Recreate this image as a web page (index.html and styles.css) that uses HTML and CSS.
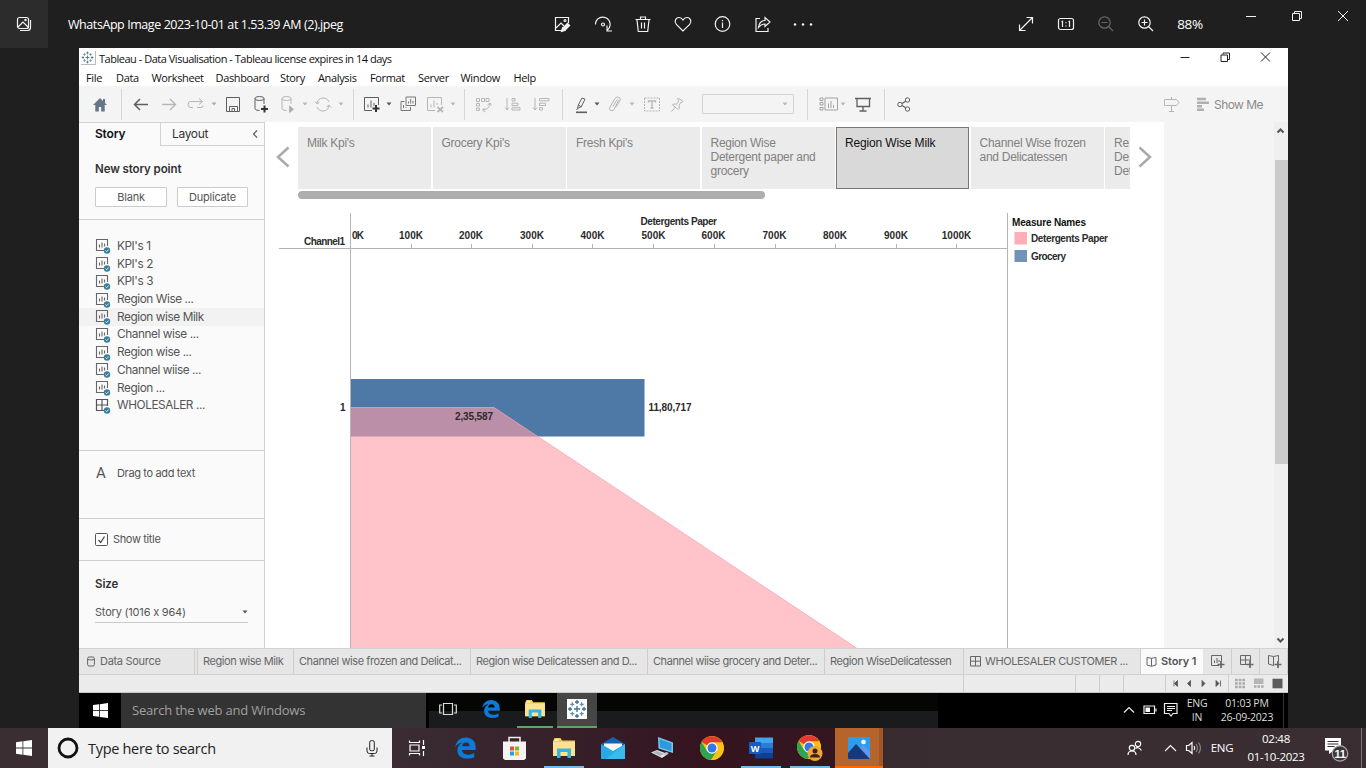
FILE: index.html
```html
<!DOCTYPE html>
<html lang="en">
<head>
<meta charset="utf-8">
<title>WhatsApp Image 2023-10-01 at 1.53.39 AM (2).jpeg</title>
<link rel="stylesheet" href="styles.css">
</head>
<body>
<svg class="defs" width="0" height="0">
  <symbol id="sheet" viewBox="0 0 16 16"><path d="M9 12.500H1.500V1.500H12.500V8M4.500 9.500V6.500M7 9.500V4.500M9.500 8.500V5.500" fill="none" stroke="#666" stroke-width="1.100"/><circle cx="12" cy="12.500" r="3.200" fill="#3c7f9c"/><path d="M10.500 12.500l1.200 1.200 2-2.200" fill="none" stroke="#fff" stroke-width=".8"/></symbol>
  <symbol id="dash" viewBox="0 0 16 16"><path d="M9 12.500H1.500V1.500H12.500V8M7 1.500V12.500M1.500 7H12.500" fill="none" stroke="#555" stroke-width="1.200"/><circle cx="12" cy="12.500" r="3.200" fill="#3c7f9c"/><path d="M10.500 12.500l1.200 1.200 2-2.200" fill="none" stroke="#fff" stroke-width=".8"/></symbol>
  <symbol id="caret" viewBox="0 0 6 4"><path d="M.5.500H5.500L3 3.600Z"/></symbol>
  <symbol id="win" viewBox="0 0 16 16"><path d="M0 2.200L6.500 1.300V7.600H0ZM7.300 1.200L16 0V7.600H7.300ZM0 8.400H6.500V14.700L0 13.800ZM7.300 8.400H16V16L7.300 14.800Z" fill="#fff"/></symbol>
  <symbol id="edge" viewBox="0 0 20 20"><path d="M.3 9C1 3.500 5 0 10.300 0 16 0 20 4 19.700 9.500V12H6.600c.2 3 2.600 4.400 5.800 4.400 2.300 0 4.100-.6 5.900-1.700v4C16.300 19.700 14 20 11.500 20 5.800 20 2.300 17 2.300 12.300c0-3.400 1.800-6 5-7.500C4.500 5 1.800 6.500.3 9Zm6.500-.6h7.100c0-2.300-1.100-3.600-3.300-3.600S7 6.300 6.800 8.400Z" fill="#0b7bd8"/></symbol>
  <symbol id="folder" viewBox="0 0 22 20"><path d="M0 2.500V18H22V2.500H9L7.500 0H1.500L.5 2.500Z" fill="#f5c85a"/><path d="M0 4H22V18H0Z" fill="#ffe28d"/><path d="M1.500 1.300H6V3H1.500Z" fill="#fff3c0"/><path d="M4 10.500H18V20H14.500V14H7.500V20H4Z" fill="#35b3e4"/></symbol>
  <symbol id="chrome" viewBox="0 0 24 24"><circle cx="12" cy="12" r="12" fill="#fbc116"/><path d="M12 12L1.600 6A12 12 0 0 1 22.400 6.500H12Z" fill="#e33b2e"/><path d="M1.600 6A12 12 0 0 0 11 24L17 15 12 12 7 15Z" fill="#2da44e"/><path d="M12 6.500H22.400A12 12 0 0 1 11 24L17 15Z" fill="#fbc116"/><circle cx="12" cy="12" r="5.700" fill="#fff"/><circle cx="12" cy="12" r="4.500" fill="#3478e5"/></symbol>
  <symbol id="tableau" viewBox="0 0 20 20"><g stroke="#3b7396" stroke-width="1.300"><path d="M10 7v6M7 10h6M10 1v4M8 3h4M10 15v4M8 17h4M1 10h4M3 8v4M15 10h4M17 8v4"/><path d="M5.300 3.300v4M3.300 5.300h4M14.700 3.300v4M12.700 5.300h4M5.300 12.700v4M3.300 14.700h4M14.700 12.700v4M12.700 14.700h4" stroke="#6090aa"/></g></symbol>
</svg>

<header class="viewer">
  <span class="gallery"><svg width="16" height="16" viewBox="0 0 16 16"><rect x="1.500" y="1.500" width="11" height="11" rx="2"/><path d="M14.500 4v7.500q0 3-3 3H4M2 11l5-5 5.500 5.500"/><circle cx="9.500" cy="4" r=".6"/></svg></span>
  <span class="file">WhatsApp Image 2023-10-01 at 1.53.39 AM (2).jpeg</span>
  <svg width="20" height="20" viewBox="0 0 20 20"><path d="M9 16.500H2.500V3.500h13V9M3 14l5-5 3 3"/><circle cx="12" cy="6.500" r="1"/><path d="M8.500 17.500l1-4 5-5 3 3-5 5Z" fill="#eee" stroke="none"/><path d="M8.500 17.500l1-3.500 2.500 2.500Z"/></svg>
  <svg width="20" height="20" viewBox="0 0 20 20"><path d="M2.500 10.500A7.300 7.300 0 1 1 14.500 16M14 11.500V17h5"/><circle cx="10" cy="10.500" r="1.500"/></svg>
  <svg width="20" height="20" viewBox="0 0 20 20"><path d="M2.500 5.500h15M7.500 5V3h5v2M4 6l1.300 11.500h9.400L16 6M8.500 8.500v6M11.500 8.500v6"/></svg>
  <svg width="20" height="20" viewBox="0 0 20 20"><path d="M10 17L3.300 10.300C1 8 2.300 3.500 6 3.500q2.500 0 4 2.500 1.500-2.500 4-2.500c3.700 0 5 4.500 2.700 6.800Z"/></svg>
  <svg width="20" height="20" viewBox="0 0 20 20"><circle cx="9.500" cy="10" r="7.300"/><path d="M9.500 8.500v5.500M9.500 6v1.200"/></svg>
  <svg width="20" height="20" viewBox="0 0 20 20"><path d="M7 4.500H3v13h12V14M5.500 13.500C6 9 8 6.500 12 6.500V3.500l5 4.500-5 4.500V10C9.500 9.800 7.500 11 5.500 13.500Z"/></svg>
  <svg width="20" height="20" viewBox="0 0 20 20"><g fill="#fff" stroke="none"><circle cx="2" cy="10.500" r="1.200"/><circle cx="10" cy="10.500" r="1.200"/><circle cx="18" cy="10.500" r="1.200"/></g></svg>
  <i></i>
  <svg width="20" height="20" viewBox="0 0 20 20"><path d="M3.500 16.500L16.500 3.500M10.500 3.500h6v6M3.500 10.500v6h6"/></svg>
  <svg width="20" height="20" viewBox="0 0 20 20"><rect x="2.500" y="4.500" width="15" height="11" rx="2"/><path d="M5.500 8l1-.7V13M12.500 8l1-.7V13M10 8.200v1M10 11.500v1"/></svg>
  <svg class="off" width="20" height="20" viewBox="0 0 20 20"><circle cx="8.500" cy="8.500" r="5.700"/><path d="M12.500 12.500l4.500 4.500M5.500 8.500h6"/></svg>
  <svg width="20" height="20" viewBox="0 0 20 20"><circle cx="8.500" cy="8.500" r="5.700"/><path d="M12.500 12.500l4.500 4.500M5.500 8.500h6M8.500 5.500v6"/></svg>
  <span class="pct">88%</span>
  <i></i>
  <svg class="ctl" width="12" height="12" viewBox="0 0 12 12"><path d="M1 6.500h10"/></svg>
  <svg class="ctl" width="12" height="12" viewBox="0 0 12 12"><path d="M1.500 3.500h7v7h-7ZM3.500 3.500v-2h7v7h-2"/></svg>
  <svg class="ctl" width="12" height="12" viewBox="0 0 12 12"><path d="M1 1l10 10M11 1L1 11"/></svg>
</header>

<main class="photo">
  <div class="titlebar">
    <span class="logo"><svg width="13" height="13"><use href="#tableau"/></svg></span>
    <span class="title">Tableau - Data Visualisation - Tableau license expires in 14 days</span>
    <svg width="12" height="12" viewBox="0 0 12 12"><path d="M1.500 6.500h9"/></svg>
    <svg width="12" height="12" viewBox="0 0 12 12"><path d="M2 4h6.500v6.500H2ZM4 3.500V2h6.500v6.500H9"/></svg>
    <svg width="12" height="12" viewBox="0 0 12 12"><path d="M2 1.500l9 9M11 1.500l-9 9"/></svg>
  </div>
  <nav class="menu"><span>File</span><span>Data</span><span>Worksheet</span><span>Dashboard</span><span>Story</span><span>Analysis</span><span>Format</span><span>Server</span><span>Window</span><span>Help</span></nav>

  <div class="toolbar">
    <svg class="ic" viewBox="0 0 20 20"><path d="M10 4L3 11h2.300v6.500h3.500V13h2.400v4.500h3.500V11H17L15 9V5h-2v2Z" fill="#66758a" stroke="none"/></svg>
    <b></b>
    <svg class="ic dk" viewBox="0 0 20 20"><path d="M17 10.500H3.500M9 5l-5.500 5.500L9 16" stroke-width="1.500"/></svg>
    <svg class="ic" viewBox="0 0 20 20"><path d="M3 10.500h13.500M11 5l5.500 5.500L11 16" stroke-width="1.400"/></svg>
    <svg class="ic" viewBox="0 0 20 20"><path d="M7 13.500H5q-3 0-3-3t3-3H16M13 4.500l3.500 3-3.500 3M11 13.500h4q2 0 2-2"/></svg>
    <svg class="cr"><use href="#caret"/></svg>
    <svg class="ic dk" viewBox="0 0 20 20"><path d="M3.500 3.500h13v14h-13ZM6.500 17V12.500h8V17M9 17v-2.500h2.500V17"/></svg>
    <svg class="ic dk" viewBox="0 0 20 20"><ellipse cx="8.500" cy="4.500" rx="4.500" ry="2"/><path d="M4 4.500v10q0 2 4.500 2M13 4.500V10"/><path d="M13.500 11.500v7M10 15h7" stroke="#333" stroke-width="2"/></svg>
    <svg class="ic" viewBox="0 0 20 20"><ellipse cx="8.500" cy="4.500" rx="4.500" ry="2"/><path d="M4 4.500v10q0 2 4.500 2M13 4.500V10"/><path d="M11.500 12v6.500l4-3.200Z" fill="#aaa"/></svg>
    <svg class="cr lt"><use href="#caret"/></svg>
    <svg class="ic" viewBox="0 0 20 20"><path d="M4 9A6.300 6.300 0 0 1 16 8M16 12A6.300 6.300 0 0 1 4 13M2 7.500L4 10l2.500-2M18 13.500L16 11l-2.500 2"/></svg>
    <svg class="cr lt"><use href="#caret"/></svg>
    <b></b>
    <svg class="ic dk" viewBox="0 0 20 20"><path d="M10 16.500H2.500v-13h14V11M6 13.500v-3M9 13.500v-7M12 12V9"/><path d="M14 11v7M10.500 14.500h7" stroke="#333" stroke-width="2"/></svg>
    <svg class="cr blk"><use href="#caret"/></svg>
    <svg class="ic md" viewBox="0 0 20 20"><path d="M8 3h9.500v8.500H8ZM6.500 7.500H3v9h9.500V13M10.500 9.500v-2M12.700 9.500V5M15 9.500V7M5.500 14v-3M8 14v-1"/></svg>
    <svg class="ic" viewBox="0 0 20 20"><path d="M10 16.500H2.500v-13h14V11M6 13.500v-3M9 13.500v-7M12 11V9"/><path d="M12.500 13l5.500 5M18 13l-5.500 5" stroke-width="1.700"/></svg>
    <svg class="cr lt"><use href="#caret"/></svg>
    <b></b>
    <svg class="ic" viewBox="0 0 20 20"><path d="M3.500 4.500h3v3h-3ZM8.500 4.500h3v3h-3ZM13 4.500h3v3h-3ZM3.500 9.500h3v2.500h-3ZM3.500 14h3v2.500h-3ZM17 9q0 6-7 7M12 13.500L9.500 16l3 2M14.500 11l2.500-2 1.500 2.500"/></svg>
    <svg class="ic" viewBox="0 0 20 20"><path d="M4 4v12M2 13.500L4 16l2-2.500M9 4.500h3v2.500H9ZM9 9.200h6v2.300H9ZM9 13.700h8v2.300H9Z"/></svg>
    <svg class="ic" viewBox="0 0 20 20"><path d="M4 4v12M2 13.500L4 16l2-2.500M8.500 4.500H18v2.300H8.500ZM8.500 9.200h6v2.300h-6ZM8.500 13.700h3v2.300h-3Z"/></svg>
    <b></b>
    <svg class="ic dk" viewBox="0 0 20 20"><path d="M6.500 14.500l.8-3.500L11 4l3 1.200-3.700 7.500-3.800 1.800-1 1.500M7.300 11l3 1.700"/><path d="M5 18.300h11" stroke-width="1.600"/></svg>
    <svg class="cr blk"><use href="#caret"/></svg>
    <svg class="ic" viewBox="0 0 20 20"><path d="M8 12.500l3.500-6q1-1.500 2 0L9 15.500q-2 2.500-4 .5-1-1.500 0-3L10 4.500q2-2.500 4.500-1 1.500 1.500 0 4L11 13"/></svg>
    <svg class="cr lt"><use href="#caret"/></svg>
    <svg class="ic" viewBox="0 0 20 20"><rect x="2.500" y="4" width="15" height="13" stroke-dasharray="2 1"/><path d="M6.500 8.500V7h7v1.500M10 7v7M8.500 14h3" stroke-width="1.300"/></svg>
    <svg class="ic" viewBox="0 0 20 20"><path d="M10 4l5 3.500-1 1-1-.3-2 3 .3 3.300-1 1L4.500 11l1-1 3 .2 2.200-3L10 5.500ZM7.500 13L3.500 17.500"/></svg>
    <span class="combo"><svg class="cr lt"><use href="#caret"/></svg></span>
    <b></b>
    <svg class="ic md" viewBox="0 0 20 20"><path d="M1 4h3v2.500H1ZM1 8.500h3V11H1ZM1 13.500h3V16H1ZM6 4h12.500v12H6ZM9.500 14V9.500M12 14V7M14.500 14v-3" stroke="#a3a3a3"/></svg>
    <svg class="cr lt"><use href="#caret"/></svg>
    <svg class="ic dk" viewBox="0 0 20 20"><path d="M2 4.500h16M4 5v7.500h12.500V5M10 13v4M6.500 17h7" stroke-width="1.300"/></svg>
    <b></b>
    <svg class="ic dk" viewBox="0 0 20 20"><circle cx="6" cy="10.500" r="2.200"/><circle cx="13.500" cy="6" r="2.200"/><circle cx="13.500" cy="15" r="2.200"/><path d="M8 9.500l3.700-2.200M8 11.500l3.700 2.200" stroke-width="1.300"/></svg>
    <svg class="ic" viewBox="0 0 20 20"><path d="M3.500 5.500h12l2.500 3-2.500 3h-12ZM10.500 3v2.500M10.500 11.500v6M8 17.500h5"/></svg>
    <span class="showme"><svg width="13" height="14" viewBox="0 0 13 14"><path d="M1 2h9M1 5.700h12M1 9.300h5M1 12.700h7" stroke="#b0b0b0" stroke-width="2.400"/></svg>Show Me</span>
  </div>

  <div class="work">
    <aside class="side">
      <div class="tabs"><strong>Story</strong><span>Layout<svg width="7" height="10" viewBox="0 0 7 10"><path d="M5 1.500L1.500 5 5 8.500" fill="none" stroke="#555" stroke-width="1.200"/></svg></span></div>
      <section class="newpoint"><h2>New story point</h2><div><button>Blank</button><button>Duplicate</button></div></section>
      <ul class="sheets">
        <li><svg><use href="#sheet"/></svg>KPI's 1</li>
        <li><svg><use href="#sheet"/></svg>KPI's 2</li>
        <li><svg><use href="#sheet"/></svg>KPI's 3</li>
        <li><svg><use href="#sheet"/></svg>Region Wise ...</li>
        <li class="on"><svg><use href="#sheet"/></svg>Region wise Milk</li>
        <li><svg><use href="#sheet"/></svg>Channel wise ...</li>
        <li><svg><use href="#sheet"/></svg>Region wise ...</li>
        <li><svg><use href="#sheet"/></svg>Channel wiise ...</li>
        <li><svg><use href="#sheet"/></svg>Region ...</li>
        <li><svg><use href="#dash"/></svg>WHOLESALER ...</li>
      </ul>
      <section class="drag"><b>A</b>Drag to add text</section>
      <section class="show"><svg width="13" height="13" viewBox="0 0 13 13"><rect x=".5" y=".5" width="12" height="12" rx="1" fill="#fff" stroke="#555"/><path d="M3.500 7l2.200 2.500L9.500 3.500" fill="none" stroke="#444" stroke-width="1.300"/></svg>Show title</section>
      <section class="size"><h2>Size</h2><div>Story (1016 x 964)<svg class="cr blk"><use href="#caret"/></svg></div></section>
    </aside>

    <div class="story">
      <div class="navrow">
        <svg width="14" height="22" viewBox="0 0 14 22"><path d="M12.500 1.500L2 11l10.500 9.500"/></svg>
        <div class="cards">
          <div>Milk Kpi's</div><div>Grocery Kpi's</div><div>Fresh Kpi's</div>
          <div>Region Wise<br>Detergent paper and<br>grocery</div>
          <div class="sel">Region Wise Milk</div>
          <div>Channel Wise frozen<br>and Delicatessen</div>
          <div class="part">Re<br>De<br>Det</div>
        </div>
        <svg width="14" height="22" viewBox="0 0 14 22"><path d="M1.500 1.500L12 11 1.500 20.500"/></svg>
      </div>
      <div class="hscroll"></div>
      <svg class="chart" width="899" height="449" viewBox="265 199 899 449">
        <rect x="350" y="379" width="294.500" height="57.500" fill="#4e79a7"/>
        <path d="M350 407.500H494L856.500 648H350Z" fill="#ff9da7" fill-opacity=".61"/>
        <path d="M350 407.500H494L856.500 648" fill="none" stroke="#f8a3af" stroke-opacity=".75"/>
        <path d="M350.500 213V648M1007.500 213V648M279 248.500H1008" class="axis"/>
        <path d="M411.500 244v4M471.500 244v4M532.500 244v4M592.500 244v4M653.500 244v4M714.500 244v4M775.500 244v4M835.500 244v4M896.500 244v4M956.500 244v4" class="axis"/>
        <g class="lbl">
          <text x="640.500" y="225" textLength="76.500">Detergents Paper</text>
          <text x="304" y="245" textLength="41">Channel1</text>
          <text x="352" y="239" textLength="12">0K</text>
          <g text-anchor="middle"><text x="411" y="239">100K</text><text x="471" y="239">200K</text><text x="532" y="239">300K</text><text x="592.500" y="239">400K</text><text x="653.500" y="239">500K</text><text x="713.500" y="239">600K</text><text x="774.500" y="239">700K</text><text x="835" y="239">800K</text><text x="896" y="239">900K</text><text x="956.500" y="239">1000K</text></g>
          <text x="340" y="411">1</text>
          <text x="648.500" y="411" textLength="43">11,80,717</text>
          <text x="455" y="420" textLength="38">2,35,587</text>
          <text x="1012" y="226" textLength="74" fill="#111">Measure Names</text>
          <text x="1031" y="242" textLength="77">Detergents Paper</text>
          <text x="1031" y="260" textLength="35">Grocery</text>
        </g>
        <rect x="1014.500" y="232" width="12.500" height="12.500" fill="#ffaeb8"/>
        <rect x="1014.500" y="250" width="12.500" height="12" fill="#7193b9"/>
      </svg>
    </div>
    <div class="vscroll"><svg width="9" height="6" viewBox="0 0 9 6"><path d="M1.500 4.500l3-3 3 3"/></svg><i></i><svg width="9" height="6" viewBox="0 0 9 6"><path d="M1.500 1.500l3 3 3-3"/></svg></div>
  </div>

  <div class="sheettabs">
    <span class="ds"><svg width="8" height="11" viewBox="0 0 8 11"><rect x=".6" y="1" width="6.800" height="9" rx="1.500"/><path d="M1 3.500q3 1 6 0"/></svg>Data Source</span><i></i>
    <span>Region wise Milk</span><span>Channel wise frozen and Delicat...</span><span>Region wise Delicatessen and D...</span><span>Channel wiise grocery and Deter...</span><span>Region WiseDelicatessen</span>
    <span class="who"><svg width="11" height="11" viewBox="0 0 11 11"><path d="M.5.500h10v9.500H.5ZM5.500.500V10M.5 5.200h10"/></svg>WHOLESALER CUSTOMER ...</span>
    <span class="cur"><svg width="11" height="11" viewBox="0 0 11 11"><path d="M1 1.500l4.500.8L10 1.500V9l-4.500 1.300L1 9ZM5.500 2.300V10"/></svg>Story 1</span>
    <span class="add"><svg width="15" height="15" viewBox="0 0 15 15"><path d="M9 11.500H1.500v-10h10V7M4.500 9V6.500M7 9V4M9 8V6"/><path d="M11 7v7M7.500 10.500h7" stroke-width="1.700"/></svg></span>
    <span class="add"><svg width="15" height="15" viewBox="0 0 15 15"><path d="M8 10.500H1.500v-9h10V7M6.500 1.500v9M1.500 6h10"/><path d="M11 7v7M7.500 10.500h7" stroke-width="1.700"/></svg></span>
    <span class="add"><svg width="15" height="15" viewBox="0 0 15 15"><path d="M6.500 11.500l-5-1.500V1.500l5 1 5-1V7M6.500 2.500v9"/><path d="M11 7v7M7.500 10.500h7" stroke-width="1.700"/></svg></span>
  </div>
  <div class="status"><i></i><i></i><i></i><i></i><i></i>
    <span><svg width="54" height="9" viewBox="0 0 54 9"><path d="M3 1.500v6M6.500 1.500v6L3.500 4.500ZM19.500 1.500v6l-3-3ZM31 1.500v6l3-3ZM45 1.500v6l3-3ZM49.500 1.500v6" fill="#555" stroke="#555" stroke-width=".8"/></svg></span>
    <span><svg width="50" height="11" viewBox="0 0 50 11"><path d="M1 2h10M1 5.500h10M1 9h10" stroke="#aaa" stroke-width="2.500" stroke-dasharray="2.700 1"/><path d="M20 .5h9.500v5.500H20Z" fill="#b5b5b5"/><path d="M20 8.500h9.500" stroke="#aaa" stroke-width="2.500" stroke-dasharray="2.500 1"/><path d="M38.500.700h10v9.600h-10Z" fill="#5c5c5c"/></svg></span>
  </div>

  <div class="innerbar">
    <span class="start"><svg width="15" height="15"><use href="#win"/></svg></span>
    <span class="find">Search the web and Windows</span>
    <span class="apps">
      <span><svg width="18" height="14" viewBox="0 0 18 14"><path d="M4.500 1.500h9v11h-9ZM3 3H.7v8H3M15 3h2.300v8H15" fill="none" stroke="#ddd" stroke-width="1.200"/></svg></span>
      <span><svg width="18" height="20"><use href="#edge"/></svg></span>
      <span class="open"><svg width="20" height="18"><use href="#folder"/></svg></span>
      <span class="tb"><svg width="20" height="20"><use href="#tableau"/></svg></span>
    </span>
    <span class="tray">
      <svg width="12" height="8" viewBox="0 0 12 8"><path d="M1 6.500l5-5 5 5"/></svg>
      <svg width="14" height="10" viewBox="0 0 14 10"><path d="M1 1h10.500v7.500H1ZM13 3.500v3"/><path d="M2.500 2.500H7V7H2.500Z" fill="#fff" stroke="none"/></svg>
      <svg width="16" height="16" viewBox="0 0 16 16"><path d="M1.500 1.500h12.500v10H10L8 14l-2-2.500H1.500ZM4 4.500h8M4 6.500h8M4 8.500h5"/></svg>
      <span>ENG<br>IN</span><span>01:03 PM<br>26-09-2023</span>
    </span>
  </div>
</main>

<footer class="taskbar">
  <span class="start"><svg width="16" height="16"><use href="#win"/></svg></span>
  <span class="search"><svg width="22" height="22" viewBox="0 0 22 22"><circle cx="11" cy="11" r="9" fill="none" stroke="#111" stroke-width="2.800"/></svg><span>Type here to search</span><svg width="12" height="17" viewBox="0 0 12 17"><rect x="3.700" y=".7" width="4.600" height="10" rx="1.500" fill="none" stroke="#222"/><path d="M1 7.500V11q0 2.500 2.500 2.500h5Q11 13.500 11 11V7.500M6 13.500V16M3.500 16h5" fill="none" stroke="#222"/></svg></span>
  <span class="app"><svg width="18" height="16" viewBox="0 0 18 16"><path d="M2 5h9v6H2ZM1.500.500v2h10v-2M1.500 15.500v-2h10v2M15.500 0v5M15.500 11v5" fill="none" stroke="#fff" stroke-width="1.200"/><path d="M14 6h3v3h-3Z" fill="#fff"/></svg></span>
  <span class="app"><svg width="21" height="22"><use href="#edge"/></svg></span>
  <span class="app"><svg width="23" height="24" viewBox="0 0 23 24"><path d="M6 7V1.500h11V7" fill="none" stroke="#eee" stroke-width="1.500"/><path d="M0 5.500H23V22.500L21 24H2L0 22.500Z" fill="#f3f3f3"/><path d="M7 10.500h4v4H7Z" fill="#e8502c"/><path d="M12 10.500h4v4h-4Z" fill="#7fb82c"/><path d="M7 15.500h4v4H7Z" fill="#20a1e8"/><path d="M12 15.500h4v4h-4Z" fill="#f5b61b"/></svg></span>
  <span class="app run"><svg width="22" height="20"><use href="#folder"/></svg></span>
  <span class="app"><svg width="24" height="22" viewBox="0 0 24 22"><path d="M0 7L12 0l12 7-12 8Z" fill="#1263b3"/><path d="M3 6.500H21V10l-9 6-9-6Z" fill="#f7f7f7"/><path d="M0 7l12 7 12-7V22H0Z" fill="#28aae8"/><path d="M5 22L24 7V22Z" fill="#3db9ef"/></svg></span>
  <span class="app"><svg width="24" height="22" viewBox="0 0 24 22"><path d="M7 0L22 5.500V16L7.500 11.500Z" fill="#79c6ee"/><path d="M8.500 2L20.500 6.500V14L9 10.500Z" fill="#2b99dc"/><path d="M0 15.500L6 13l11 4-6 4Z" fill="#dfe5e8"/><path d="M2 15.500l4-1.500 7 3-4 2Z" fill="#aab4ba"/><path d="M15 15l3 1-3 2-3-1Z" fill="#bdc5cb"/></svg></span>
  <span class="app"><svg width="24" height="24"><use href="#chrome"/></svg></span>
  <span class="app run"><svg width="24" height="22" viewBox="0 0 24 22"><path d="M6 .5H24V6H6Z" fill="#41a5ee"/><path d="M6 6H24v5.500H6Z" fill="#2b7cd3"/><path d="M6 11H24v5.500H6Z" fill="#185abd"/><path d="M6 16H24v5.500H6Z" fill="#103f91"/><rect y="5" width="12" height="12" rx="1" fill="#185abd"/><text x="6" y="14.500" text-anchor="middle" class="w">W</text></svg></span>
  <span class="app run"><svg width="26" height="26" viewBox="0 0 26 26"><svg width="24" height="24"><use href="#chrome"/></svg><circle cx="18" cy="18.500" r="7.500" fill="#f4a533"/><circle cx="18" cy="16" r="2.500" fill="#33251b"/><path d="M13 22.500q0-3.500 5-3.500t5 3.500Z" fill="#33251b"/></svg></span>
  <span class="app active"><svg width="22" height="22" viewBox="0 0 22 22"><rect width="22" height="22" rx="1" fill="#2a9df0"/><path d="M12 11L15 8l7 7v7H13Z" fill="#6396ee"/><path d="M0 16L8 7l14 15H1q-1 0-1-1Z" fill="#123b78"/><circle cx="15.500" cy="5" r="2.300" fill="#fff"/></svg></span>
  <span class="systray">
    <svg width="16" height="16" viewBox="0 0 16 16"><circle cx="5" cy="8" r="2.700"/><path d="M1 15q0-4 4-4t4 4"/><circle cx="11" cy="4" r="2.700"/><path d="M8.500 8.500Q11 6 14.500 10.500"/></svg>
    <svg width="13" height="8" viewBox="0 0 13 8"><path d="M1 7l5.500-5.500L12 7"/></svg>
    <svg width="17" height="14" viewBox="0 0 17 14"><path d="M1.500 4.500h2.200L7 1.500v11L3.700 9.500H1.500ZM9 5q1.500 2 0 4"/><path d="M11 3q3 4 0 8M13.500 1.500q4 5.500 0 11" stroke="#8b8285"/></svg>
    <span>ENG</span><span>02:48<br>01-10-2023</span>
    <svg width="25" height="25" viewBox="0 0 25 25"><path d="M1 1H17V13.500H10L5 17V13.500H1Z" fill="#fff" stroke="none"/><path d="M3.500 4.500h11M3.500 7h11M3.500 9.500h7" stroke="#3a2e33"/><circle cx="16" cy="16.500" r="7.700" fill="#3c3539" stroke="#aaa"/><text x="16" y="21" text-anchor="middle" class="n">11</text></svg>
  </span>
</footer>
</body>
</html>
```
FILE: styles.css
```css
* { box-sizing: border-box; }
body { margin: 0; width: 1366px; height: 768px; overflow: hidden; background: #1f1f1f; font-family: "Open Sans", "Noto Sans", sans-serif; color: #222; }
svg { display: block; flex: none; overflow: visible; }
.defs { position: absolute; }
h2 { margin: 0; font-weight: 600; }

/* photo viewer header */
.viewer { height: 48px; display: grid; grid-template-columns: 48px 495px repeat(7, 40px) 183px repeat(4, 40px) 48px 14px repeat(3, 46px); align-items: center; justify-items: center; color: #fff; }
.viewer svg { fill: none; stroke: #f2f2f2; stroke-width: 1.2; }
.viewer .off { stroke: #666; }
.viewer .ctl { stroke-width: 1; align-self: start; margin-top: 10px; }
.gallery { width: 48px; height: 48px; background: #2c2c2c; display: grid; place-items: center; }
.file { justify-self: start; padding-left: 20px; font-size: 12.5px; letter-spacing: -.43px; white-space: nowrap; }
.pct { font-size: 13.5px; letter-spacing: -.3px; }

.photo { width: 1209px; height: 680px; margin-left: 79px; background: #fff; display: flex; flex-direction: column; }
.titlebar { height: 20px; display: grid; grid-template-columns: 20px 1066px 40px 40px 40px; align-items: center; color: #111; font-size: 11px; letter-spacing: -.48px; }
.title { white-space: nowrap; }
.titlebar > svg { fill: none; stroke: #222; justify-self: center; margin-bottom: 2px; }
.logo { width: 15px; height: 14px; margin-left: 2px; border-right: 1px solid #bbb; border-bottom: 1px solid #bbb; }
.menu { height: 18px; display: grid; grid-template-columns: 30px 35.500px 64px 64.500px 38px 52px 48px 42.500px 53px 40px; padding-left: 7px; font-size: 11px; letter-spacing: -.35px; line-height: 20px; color: #111; }

.toolbar { height: 36px; padding-left: 11px; background: #f4f4f4; display: grid; align-items: center; grid-template-columns: 31px 10px 28px 27px 25px 12px 28px 27px 24px 11px 25px 15px 9px 24px 12px 27px 25px 14px 9px 30px 28px 31px 9px 23px 11px 24px 13px 26px 34px 105px 12px 21px 13px 31px 10px 267px 35px auto; }
.toolbar b { width: 1px; height: 31px; background: #d6d6d6; }
.ic { width: 20px; height: 20px; fill: none; stroke: #b6b6b6; }
.ic.dk { stroke: #5f5f5f; }
.ic.md { stroke: #777; }
.cr { width: 6px; height: 4px; fill: #aaa; }
.cr.lt { fill: #b8b8b8; }
.cr.blk { fill: #555; }
.combo { width: 92px; height: 20px; border: 1px solid #d3d3d3; border-radius: 1px; display: flex; align-items: center; justify-content: flex-end; padding-right: 5px; }
.showme { display: flex; align-items: center; gap: 5px; font-family: Inter, sans-serif; font-size: 12px; letter-spacing: -.55px; color: #8b8b8b; white-space: nowrap; }

.work { height: 526px; display: grid; grid-template-columns: 186px 899px 1fr; background: #f4f4f4; }
.side { height: 526px; background: #fafafa; border-right: 1px solid #d0d0d0; font-family: Inter, sans-serif; font-size: 11px; letter-spacing: -.35px; color: #555; }
.side section { border-top: 1px solid #d0d0d0; }
.side .newpoint { border: 0; height: 73px; padding: 16px 0 0 16px; }
.side h2 { font-size: 11.5px; line-height: 14px; letter-spacing: -.1px; color: #333; }
.newpoint div { display: flex; gap: 10px; margin-top: 11px; }
.newpoint button { width: 72px; height: 20px; padding: 0; border: 1px solid #ccc; border-radius: 1px; background: #fff; font: 11px Inter, sans-serif; letter-spacing: -.2px; color: #555; }
.newpoint button + button { width: 71px; }
.tabs { height: 24px; display: grid; grid-template-columns: 81px 1fr; border-top: 1px solid #d3d3d3; line-height: 22px; font-size: 12px; color: #111; }
.tabs strong { padding-left: 16px; font-weight: 600; letter-spacing: -.2px; }
.tabs span { display: flex; align-items: center; justify-content: space-between; padding: 0 5px 0 11px; border: 1px solid #d3d3d3; border-width: 0 0 1px 1px; color: #333; }
.sheets { list-style: none; margin: 0; height: 231px; padding: 17px 0 0; border-top: 1px solid #d0d0d0; }
.sheets li { height: 17.72px; display: flex; align-items: center; gap: 6px; padding-left: 16px; font-size: 11.800px; letter-spacing: -.42px; white-space: nowrap; }
.sheets .on { background: #f2f2f2; }
.sheets svg { width: 16px; height: 16px; margin-top: 1px; }
.drag { height: 68px; display: flex; padding: 14px 0 0 17px; line-height: 16px; font-size: 11px; }
.drag b { width: 21px; font: 15px/16px Roboto, sans-serif; }
.show { height: 42px; display: flex; align-items: center; gap: 5px; padding: 0 0 1px 16px; }
.size { padding: 16px 16px 0; }
.size div { display: flex; justify-content: space-between; align-items: center; height: 22px; margin-top: 10px; border-bottom: 1px solid #ccc; font-size: 11px; letter-spacing: -.2px; }

.story { height: 526px; background: #fff; overflow: hidden; font-family: "Liberation Sans", Arial, sans-serif; }
.navrow { display: flex; align-items: center; height: 62px; margin: 4.500px 0 0 11px; gap: 8px; }
.navrow > svg { fill: none; stroke: #aaa; stroke-width: 2.500; margin-bottom: 2px; }
.cards { width: 832px; height: 62px; display: flex; gap: 1.500px; overflow: hidden; }
.cards div { flex: none; width: 133px; padding: 9px 0 0 9px; background: #ebebeb; color: #818181; font-size: 12px; letter-spacing: -.27px; line-height: 14.300px; white-space: nowrap; }
.cards .sel { background: #d9d9d9; border: 1px solid #777; padding: 8px 0 0 8px; color: #111; letter-spacing: -.15px; }
.cards .part { width: 25px; }
.hscroll { width: 467px; height: 8px; margin: 2.500px 0 0 33px; border-radius: 4px; background: #aeaeae; }
.chart .axis { stroke: #b5b5b5; fill: none; }
.chart .lbl { font: bold 10px "Liberation Sans", Arial, sans-serif; fill: #2b2b2b; }
.vscroll { width: 14px; height: 526px; margin-left: 110px; padding: 6px 0 5px; background: #efefef; display: flex; flex-direction: column; align-items: center; }
.vscroll svg { fill: none; stroke: #555; stroke-width: 2; margin-right: 1px; }
.vscroll i { width: 13px; height: 304px; margin: 26px 0 auto; background: #cbcbcb; }

.sheettabs { height: 26.500px; display: grid; grid-template-columns: 116px 3px 96px 177px 177px 177px 139px 177px 62px 28.500px 28.500px 28px; border-top: 1px solid #d2d2d2; border-bottom: 1px solid #d0d0d0; background: #e6e6e6; font: 11px Inter, sans-serif; letter-spacing: -.43px; color: #666; }
.sheettabs span { display: flex; align-items: center; padding-left: 5px; border-right: 1px solid #cdcdcd; white-space: nowrap; }
.sheettabs i { border-right: 1px solid #cdcdcd; }
.sheettabs svg { fill: none; stroke: #666; }
.sheettabs .ds { gap: 5px; padding-left: 8px; letter-spacing: -.3px; }
.sheettabs .who { gap: 4px; padding-left: 6px; }
.sheettabs .cur { gap: 4px; background: #fafafa; font-weight: 600; letter-spacing: -.1px; color: #555; border: 0; }
.sheettabs .add { padding-left: 7px; }
.status { height: 18px; display: grid; grid-template-columns: 885px 112px 24px 24px 42px 63px 59px; background: #ebebeb; border-bottom: 1px solid #c8c8c8; }
.status i { border-right: 1px solid #cecece; }
.status span { display: flex; align-items: center; padding-left: 5px; border-right: 1px solid #cecece; }
.status span + span { padding-left: 5px; border: 0; }

.innerbar { flex: 1; display: grid; grid-template-columns: 42px 305px 512px 350px; background: #000; color: #ddd; }
.innerbar .start { display: grid; place-items: center; }
.find { background: #333; padding-left: 11px; font-size: 13px; letter-spacing: -.2px; line-height: 35px; color: #a0a0a0; white-space: nowrap; }
.apps { margin-left: 3px; display: grid; grid-template-columns: 38px 47px 43px 40px; background: linear-gradient(#050604 0 50%, #1a1b1d 52%); }
.apps span { display: grid; place-items: center; border-bottom: 2px solid transparent; }
.apps .open { width: 36px; margin-left: 3px; border-color: #5ba75c; }
.apps .tb { width: 40px; background: #464646; border-color: #5ba75c; }
.tb svg { background: #fff; }
.tray { display: grid; grid-template-columns: 21px 21px 22px 30px 70px; margin-left: 180px; align-items: center; justify-items: center; font-size: 10.500px; line-height: 14.500px; text-align: center; letter-spacing: -.25px; white-space: nowrap; border-right: 1px solid #333; width: 166px; }
.tray svg { fill: none; stroke: #eee; stroke-width: 1.200; }

.taskbar { height: 40px; display: flex; background: linear-gradient(90deg, #3a2e33 0, #3a2c32 400px, #361d28 600px, #34141f 700px, #341621 840px, #392c31 890px, #3a2e33 100%); color: #fff; }
.taskbar .start { width: 48px; display: grid; place-items: center; }
.search { width: 344px; display: flex; align-items: center; padding: 0 14px 0 9px; gap: 9px; background: #f1f1f1; color: #222; font-size: 14.500px; letter-spacing: -.3px; }
.search span { flex: 1; white-space: nowrap; }
.app { width: 49.200px; display: grid; place-items: center; padding-top: 1px; border-bottom: 2px solid transparent; }
.run { background: linear-gradient(#76b9ed, #76b9ed) center bottom / 40px 2px no-repeat border-box; }
.active { width: 48px; background: linear-gradient(90deg, #b5652b 0 44px, #a25625 44px); border-color: #ff6a00; }
.w { font: bold 9px "Open Sans", sans-serif; fill: #fff; }
.n { font: bold 11px "Liberation Sans", sans-serif; fill: #fff; stroke: none; }
.systray { margin-left: auto; width: 245px; margin-right: 4px; border-right: 1px solid #777; display: grid; grid-template-columns: 35px 36px 10px 48px 60px 56px; align-items: center; justify-items: center; font-size: 11.500px; line-height: 18px; letter-spacing: -.3px; text-align: center; white-space: nowrap; }
.systray svg { fill: none; stroke: #fff; stroke-width: 1.200; }
.systray svg:last-child { margin-left: 5px; margin-top: 2px; }
```
